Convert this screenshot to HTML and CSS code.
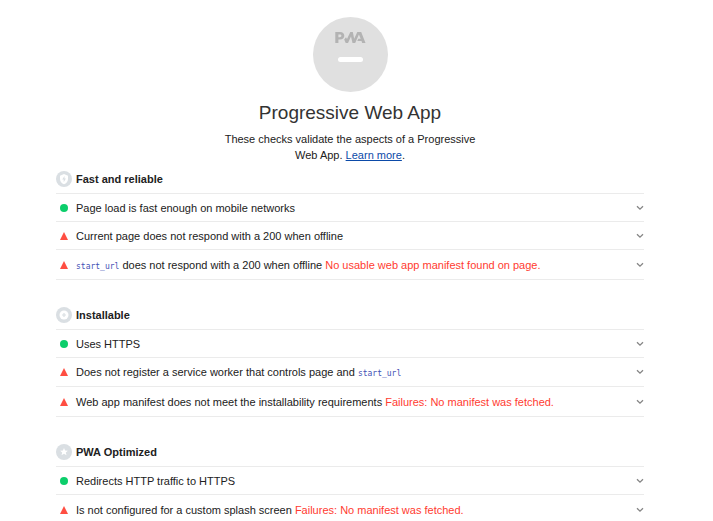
FILE: index.html
```html
<!DOCTYPE html>
<html lang="en">
<head>
<meta charset="utf-8">
<title>Progressive Web App</title>
<link rel="stylesheet" href="styles.css">
</head>
<body>
<svg width="0" height="0" class="defs" aria-hidden="true">
  <symbol id="chevron" viewBox="0 0 8 6"><path d="M1 1.2 4 4.2 7 1.2" fill="none" stroke="#858585" stroke-width="1.3"/></symbol>
  <symbol id="pass" viewBox="0 0 8 8"><circle cx="4" cy="4" r="4" fill="#0cce6b"/></symbol>
  <symbol id="fail" viewBox="0 0 8 8"><path d="M4 0 8 8H0z" fill="#ff4e42"/></symbol>
</svg>
<main class="report">
  <header class="intro">
    <svg class="gauge" viewBox="0 0 75 75" role="img" aria-label="PWA">
      <circle cx="37.5" cy="37.5" r="37.5" fill="#e0e0e0"/>
      <g fill="#b3b3b3">
        <path fill-rule="evenodd" d="M22.3 15H27c2.700 0 4.300 1.400 4.300 3.700S29.700 22.500 27 22.500h-1.600V26h-3.100zM25.400 17.500v2.700h1.300c1.100 0 1.700-.500 1.700-1.350s-.6-1.350-1.700-1.350z"/>
        <path d="M31.200 22.500 33 20.300 34 22 37.300 15H39.800L41.200 21.700 44.300 15H47L42.200 26H39.500L38 19.500 35 26H32.700z"/>
        <path d="M46.200 15H48.200L52.500 26H49.200L48.500 24H44.300L45.300 21.700H47.700L45.700 17z"/>
      </g>
      <rect x="25" y="40" width="25" height="5" rx="2.500" fill="#fff"/>
    </svg>
    <h1 class="title">Progressive Web App</h1>
    <p class="summary">These checks validate the aspects of a Progressive Web App. <a href="#learn">Learn more</a>.</p>
  </header>

  <section class="group">
    <h2 class="group-title">
      <svg class="badge" viewBox="0 0 16 16" aria-hidden="true"><circle cx="8" cy="8" r="8" fill="#dadfe3"/><path d="M8 3 12 4.700V8c0 2.500-1.600 4.400-4 5.200C5.600 12.400 4 10.500 4 8V4.700z" fill="#fff"/><path d="M8.500 5 6.200 8.600H7.700V11.300L9.900 7.500H8.500z" fill="#dadfe3"/></svg>
      Fast and reliable
    </h2>
    <details class="audit"><summary><svg class="mark"><use href="#pass"/></svg><span class="text">Page load is fast enough on mobile networks</span><svg class="chevron"><use href="#chevron"/></svg></summary></details>
    <details class="audit"><summary><svg class="mark"><use href="#fail"/></svg><span class="text">Current page does not respond with a 200 when offline</span><svg class="chevron"><use href="#chevron"/></svg></summary></details>
    <details class="audit audit-explained"><summary><svg class="mark"><use href="#fail"/></svg><span class="text"><code>start_url</code> does not respond with a 200 when offline <span class="reason">No usable web app manifest found on page.</span></span><svg class="chevron"><use href="#chevron"/></svg></summary></details>
  </section>

  <section class="group">
    <h2 class="group-title">
      <svg class="badge" viewBox="0 0 16 16" aria-hidden="true"><circle cx="8" cy="8" r="8" fill="#dadfe3"/><circle cx="8" cy="8" r="4.500" fill="#fff"/><path d="M7.400 6H8.600V7.400H10V8.600H8.600V10H7.400V8.600H6V7.400H7.400z" fill="#dadfe3"/></svg>
      Installable
    </h2>
    <details class="audit"><summary><svg class="mark"><use href="#pass"/></svg><span class="text">Uses HTTPS</span><svg class="chevron"><use href="#chevron"/></svg></summary></details>
    <details class="audit audit-code"><summary><svg class="mark"><use href="#fail"/></svg><span class="text">Does not register a service worker that controls page and <code>start_url</code></span><svg class="chevron"><use href="#chevron"/></svg></summary></details>
    <details class="audit audit-explained"><summary><svg class="mark"><use href="#fail"/></svg><span class="text">Web app manifest does not meet the installability requirements <span class="reason">Failures: No manifest was fetched.</span></span><svg class="chevron"><use href="#chevron"/></svg></summary></details>
  </section>

  <section class="group">
    <h2 class="group-title">
      <svg class="badge" viewBox="0 0 16 16" aria-hidden="true"><circle cx="8" cy="8" r="8" fill="#dadfe3"/><path d="M8 4 9.100 6.600 11.900 6.800 9.800 8.600 10.500 11.300 8 9.800 5.500 11.300 6.200 8.600 4.100 6.800 6.900 6.600z" fill="#fff"/></svg>
      PWA Optimized
    </h2>
    <details class="audit"><summary><svg class="mark"><use href="#pass"/></svg><span class="text">Redirects HTTP traffic to HTTPS</span><svg class="chevron"><use href="#chevron"/></svg></summary></details>
    <details class="audit audit-explained"><summary><svg class="mark"><use href="#fail"/></svg><span class="text">Is not configured for a custom splash screen <span class="reason">Failures: No manifest was fetched.</span></span><svg class="chevron"><use href="#chevron"/></svg></summary></details>
  </section>
</main>
</body>
</html>
```
FILE: styles.css
```css
* {
  box-sizing: border-box;
}

body {
  margin: 0;
  background: #fff;
  color: #212121;
  font: 11px/16px "Liberation Sans", Arial, sans-serif;
}

.defs {
  position: absolute;
}

.report {
  max-width: 700px;
  padding: 17px 56px 0;
}

.intro {
  display: flex;
  flex-direction: column;
  align-items: center;
  text-align: center;
}

.gauge {
  width: 75px;
  height: 75px;
}

.title {
  margin: 9px 0 6px;
  color: #333;
  font-size: 19px;
  line-height: 24px;
  font-weight: 400;
}

.summary {
  max-width: 260px;
  margin: 0;
  padding-bottom: 1px;
}

.summary a {
  color: #0b4aa8;
}

.group + .group {
  margin-top: 20px;
}

.group-title {
  display: flex;
  align-items: center;
  gap: 4px;
  height: 30px;
  margin: 0;
  border-bottom: 1px solid #ebebeb;
  font-size: 11px;
  font-weight: 700;
}

.badge {
  width: 16px;
  height: 16px;
}

.audit {
  border-bottom: 1px solid #ebebeb;
}

.group:last-child .audit:last-child {
  border-bottom: 0;
}

.audit summary {
  display: flex;
  align-items: center;
  height: 27px;
  padding-left: 4px;
  list-style: none;
  cursor: pointer;
}

.audit-code summary {
  height: 28px;
}

.audit-explained summary {
  height: 29px;
}

.mark {
  flex: none;
  width: 8px;
  height: 8px;
  margin-right: 8px;
}

.text {
  flex: 1;
}

.chevron {
  flex: none;
  width: 8px;
  height: 6px;
}

code {
  color: #3f51b5;
  font: 8px/8px "DejaVu Sans Mono", monospace;
}

.reason {
  color: #ff3b30;
}
```
